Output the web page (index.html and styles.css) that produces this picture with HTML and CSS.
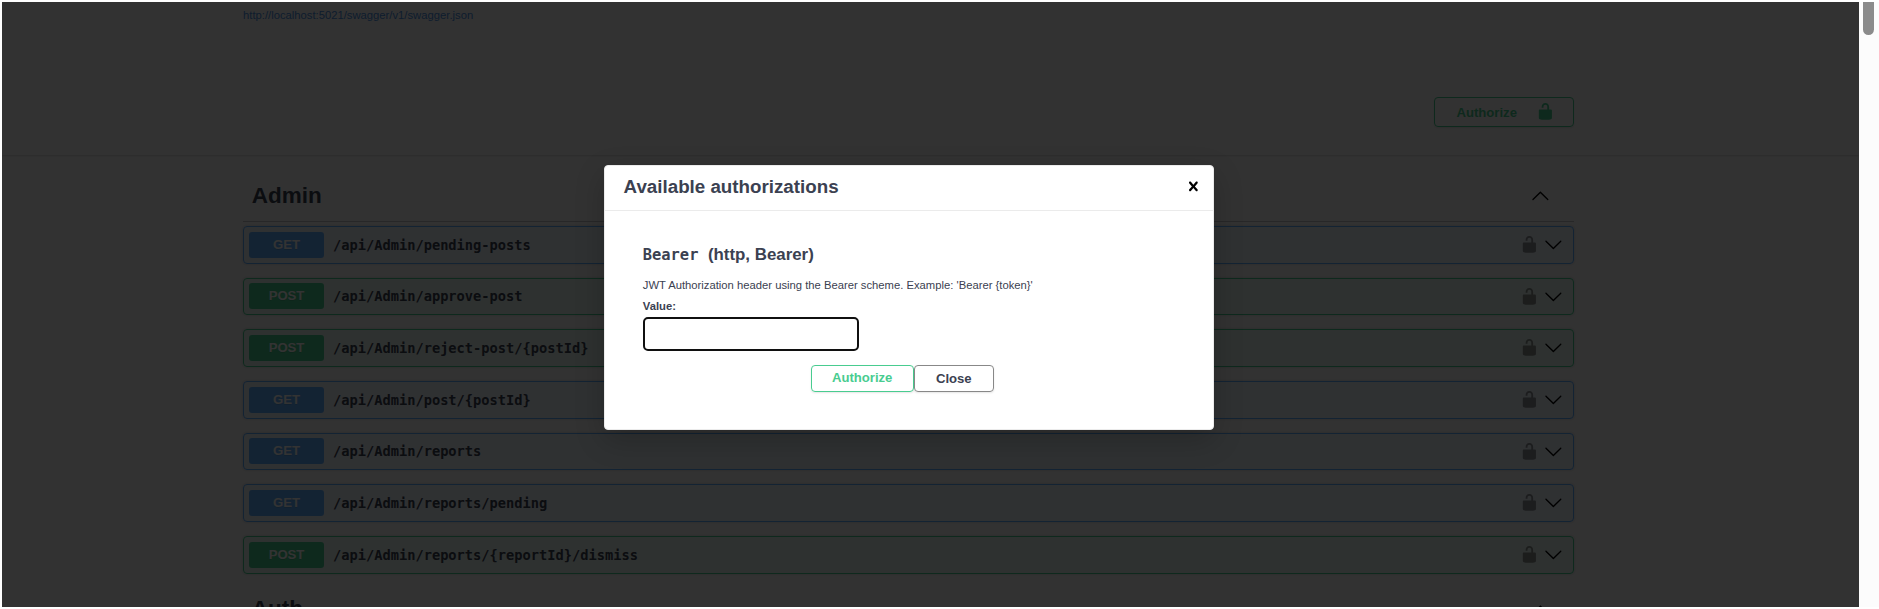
FILE: index.html
```html
<!DOCTYPE html>
<html lang="en">
<head>
<meta charset="utf-8">
<title>Swagger UI</title>
<link rel="stylesheet" href="styles.css">
</head>
<body>
<svg class="defs" width="0" height="0">
  <symbol id="unlocked" viewBox="0 0 20 20"><path d="M15.8 8H14V5.6C14 2.703 12.665 1 10 1 7.334 1 6 2.703 6 5.6V6h2v-.801C8 3.754 8.797 3 10 3c1.203 0 2 .754 2 2.199V8H4c-.553 0-1 .646-1 1.199V17c0 .549.428 1.139.951 1.307l1.197.387C5.672 18.861 6.55 19 7.1 19h5.8c.549 0 1.428-.139 1.951-.307l1.196-.387c.524-.167.953-.757.953-1.306V9.199C17 8.646 16.352 8 15.8 8z"/></symbol>
  <symbol id="down" viewBox="0 0 20 20"><path d="M17.418 6.109c.272-.268.709-.268.979 0s.271.701 0 .969l-7.908 7.83c-.27.268-.707.268-.979 0l-7.908-7.83c-.27-.268-.27-.701 0-.969.271-.268.709-.268.979 0L10 13.25l7.418-7.141z"/></symbol>
  <symbol id="up" viewBox="0 0 20 20"><path d="M17.418 14.908c.272.268.709.268.979 0s.271-.701 0-.969l-7.908-7.83c-.27-.268-.707-.268-.979 0l-7.908 7.83c-.27.268-.27.701 0 .969.271.268.709.268.979 0L10 7.767l7.418 7.141z"/></symbol>
  <symbol id="close" viewBox="0 0 20 20"><path d="M14.348 14.849c-.469.469-1.229.469-1.697 0L10 11.819l-2.651 3.029c-.469.469-1.229.469-1.697 0-.469-.469-.469-1.229 0-1.697l2.758-3.15-2.759-3.152c-.469-.469-.469-1.228 0-1.697.469-.469 1.228-.469 1.697 0L10 8.183l2.651-3.031c.469-.469 1.228-.469 1.697 0 .469.469.469 1.229 0 1.697l-2.758 3.152 2.758 3.15c.469.469.469 1.229 0 1.698z"/></symbol>
</svg>
<div class="window">
  <div class="page">
    <header class="info"><div class="wrapper"><a class="spec-link">http://localhost:5021/swagger/v1/swagger.json</a></div></header>
    <section class="schemes"><div class="wrapper schemes-row">
      <button class="btn authorize top-authorize"><span>Authorize</span><svg class="icon"><use href="#unlocked"/></svg></button>
    </div></section>
    <main class="wrapper">
      <h3 class="tag"><span>Admin</span><svg class="icon"><use href="#up"/></svg></h3>
      <div class="ops">
        <div class="op get"><span class="method">GET</span><span class="path">/api/Admin/pending-posts</span><svg class="icon lock"><use href="#unlocked"/></svg><svg class="icon"><use href="#down"/></svg></div>
        <div class="op post"><span class="method">POST</span><span class="path">/api/Admin/approve-post</span><svg class="icon lock"><use href="#unlocked"/></svg><svg class="icon"><use href="#down"/></svg></div>
        <div class="op post"><span class="method">POST</span><span class="path">/api/Admin/reject-post/{postId}</span><svg class="icon lock"><use href="#unlocked"/></svg><svg class="icon"><use href="#down"/></svg></div>
        <div class="op get"><span class="method">GET</span><span class="path">/api/Admin/post/{postId}</span><svg class="icon lock"><use href="#unlocked"/></svg><svg class="icon"><use href="#down"/></svg></div>
        <div class="op get"><span class="method">GET</span><span class="path">/api/Admin/reports</span><svg class="icon lock"><use href="#unlocked"/></svg><svg class="icon"><use href="#down"/></svg></div>
        <div class="op get"><span class="method">GET</span><span class="path">/api/Admin/reports/pending</span><svg class="icon lock"><use href="#unlocked"/></svg><svg class="icon"><use href="#down"/></svg></div>
        <div class="op post"><span class="method">POST</span><span class="path">/api/Admin/reports/{reportId}/dismiss</span><svg class="icon lock"><use href="#unlocked"/></svg><svg class="icon"><use href="#down"/></svg></div>
      </div>
      <h3 class="tag next-tag"><span>Auth</span><svg class="icon"><use href="#up"/></svg></h3>
    </main>
    <div class="backdrop">
      <div class="modal">
        <div class="modal-header"><h3>Available authorizations</h3><svg class="icon"><use href="#close"/></svg></div>
        <div class="modal-content">
          <h4><code>Bearer</code><span>(http, Bearer)</span></h4>
          <p>JWT Authorization header using the Bearer scheme. Example: 'Bearer {token}'</p>
          <label for="token">Value:</label>
          <input id="token" type="text">
          <div class="actions"><button class="btn authorize">Authorize</button><button class="btn close">Close</button></div>
        </div>
      </div>
    </div>
  </div>
  <div class="scrollbar"><div class="thumb"></div></div>
</div>
</body>
</html>
```
FILE: styles.css
```css
* { box-sizing: border-box; }
body {
  margin: 0;
  background: #fff;
  color: #3b4151;
  font-family: "Liberation Sans", Arial, sans-serif;
  overflow: hidden;
}
h3, h4, p { margin: 0; }
.defs { display: none; }
.window { display: flex; height: 609px; padding: 2px 0 2px 2px; }
.page { position: relative; width: 1857px; height: 605px; overflow: hidden; background: #fafafa; }
.scrollbar { flex: 1; padding-left: 4px; background: #fcfcfc; }
.thumb { width: 11px; height: 33px; background: #8b8b8b; border-radius: 0 0 6px 6px; }
.wrapper { width: 1331px; margin-left: 241px; }
.icon { width: 18.75px; height: 18.75px; flex: none; fill: #000; }

.info { height: 66px; padding-top: 6px; }
.spec-link { display: block; color: #4990e2; font-size: 11.25px; line-height: 15px; }
.schemes {
  height: 87px;
  padding-top: 29px;
  box-shadow: 0 1px 2px rgba(0, 0, 0, .15);
}
.schemes-row { display: flex; justify-content: flex-end; }

.btn {
  display: flex;
  align-items: center;
  justify-content: center;
  padding: 0;
  border: 1px solid #888;
  border-radius: 4px;
  background: transparent;
  box-shadow: 0 1px 2px rgba(0, 0, 0, .1);
  color: #3b4151;
  font: bold 13.125px "Liberation Sans", Arial, sans-serif;
}
.authorize { border-color: #49cc90; color: #49cc90; }
.authorize .icon { fill: #49cc90; }
.top-authorize { width: 140px; height: 30px; justify-content: space-between; padding: 1px 18px 0 21.5px; }
.top-authorize .icon { margin-top: -2px; }

.tag {
  display: flex;
  justify-content: space-between;
  align-items: center;
  height: 51px;
  margin-top: 16px;
  padding: 0 24px 1px 8.8px;
  border-bottom: 1px solid rgba(59, 65, 81, .3);
  font-size: 22.5px;
}
.next-tag { margin-top: 11px; }
.ops { display: flex; flex-direction: column; gap: 14px; padding-top: 4px; }
.op {
  display: flex;
  align-items: center;
  height: 37.67px;
  padding: 0 10.5px 0 5px;
  border: 1px solid;
  border-radius: 4px;
  box-shadow: 0 0 3px rgba(0, 0, 0, .19);
}
.get { border-color: #61affe; background: rgba(97, 175, 254, .1); }
.post { border-color: #49cc90; background: rgba(73, 204, 144, .1); }
.op .icon { margin-top: -1px; }
.method {
  width: 75px;
  height: 26px;
  border-radius: 3px;
  color: #fff;
  font-size: 13.125px;
  font-weight: bold;
  line-height: 25px;
  text-align: center;
  text-shadow: 0 1px 0 rgba(0, 0, 0, .1);
}
.get .method { background: #61affe; }
.post .method { background: #49cc90; }
.path { flex: 1; padding-left: 9px; font: bold 13.7px "DejaVu Sans Mono", monospace; }
.lock { margin-right: 5px; opacity: .4; }

.backdrop {
  position: absolute;
  inset: 0;
  display: flex;
  justify-content: center;
  align-items: flex-start;
  padding: 163px 42.8px 0 0;
  background: rgba(0, 0, 0, .8);
}
.modal {
  width: 609.4px;
  height: 265px;
  border: 1px solid #ebebeb;
  border-radius: 4px;
  background: #fff;
  box-shadow: 0 10px 30px rgba(0, 0, 0, .2);
}
.modal-header {
  display: flex;
  justify-content: space-between;
  align-items: center;
  height: 45px;
  padding: 0 10px 2px 18.2px;
  border-bottom: 1px solid #ebebeb;
}
.modal-header h3 { font-size: 18.75px; }
.modal-header .icon { margin-top: -2px; }
.modal-content { padding: 33px 37.4px 0; font-size: 11.25px; }
.modal-content h4 { display: flex; align-items: baseline; height: 22px; font-size: 16.875px; line-height: 22px; }
.modal-content code { margin-right: 9.5px; font: 600 15.4px/22px "DejaVu Sans Mono", monospace; }
.modal-content p { margin-top: 12px; line-height: 15px; }
.modal-content label { display: block; margin-top: 6px; font-weight: bold; line-height: 15px; }
.modal-content input {
  display: block;
  width: 216px;
  height: 34px;
  margin-top: 3px;
  border: 2px solid #101010;
  border-radius: 5px;
  background: #fff;
  outline: none;
}
.actions { display: flex; margin: 14px 0 0 167.8px; }
.actions .btn { height: 27px; }
.actions .authorize { width: 103.2px; padding-bottom: 2px; }
.actions .close { width: 80px; }
```
